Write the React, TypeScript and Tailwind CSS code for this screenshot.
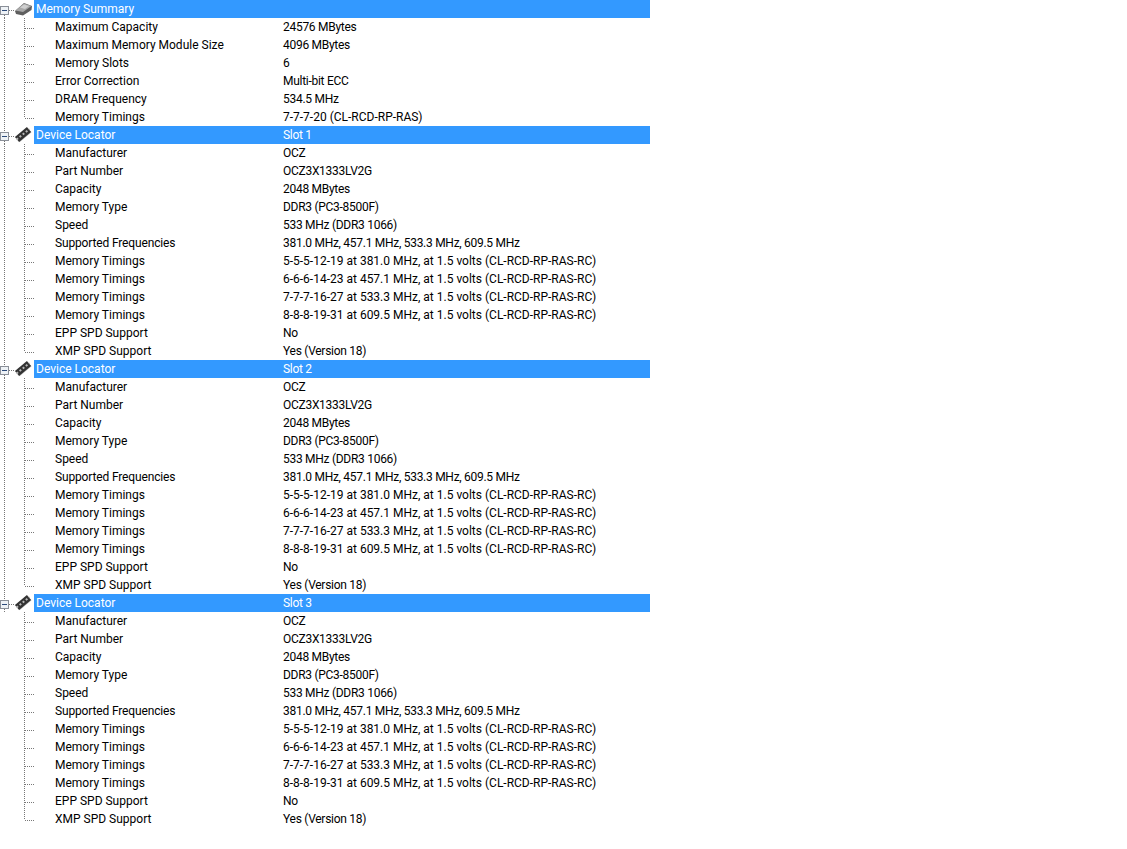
const FONT = "font-['Roboto',sans-serif]";

type Row = [string, string];

const slotRows: Row[] = [
  ["Manufacturer", "OCZ"],
  ["Part Number", "OCZ3X1333LV2G"],
  ["Capacity", "2048 MBytes"],
  ["Memory Type", "DDR3 (PC3-8500F)"],
  ["Speed", "533 MHz (DDR3 1066)"],
  ["Supported Frequencies", "381.0 MHz, 457.1 MHz, 533.3 MHz, 609.5 MHz"],
  ["Memory Timings", "5-5-5-12-19 at 381.0 MHz, at 1.5 volts (CL-RCD-RP-RAS-RC)"],
  ["Memory Timings", "6-6-6-14-23 at 457.1 MHz, at 1.5 volts (CL-RCD-RP-RAS-RC)"],
  ["Memory Timings", "7-7-7-16-27 at 533.3 MHz, at 1.5 volts (CL-RCD-RP-RAS-RC)"],
  ["Memory Timings", "8-8-8-19-31 at 609.5 MHz, at 1.5 volts (CL-RCD-RP-RAS-RC)"],
  ["EPP SPD Support", "No"],
  ["XMP SPD Support", "Yes (Version 18)"],
];

const summaryRows: Row[] = [
  ["Maximum Capacity", "24576 MBytes"],
  ["Maximum Memory Module Size", "4096 MBytes"],
  ["Memory Slots", "6"],
  ["Error Correction", "Multi-bit ECC"],
  ["DRAM Frequency", "534.5 MHz"],
  ["Memory Timings", "7-7-7-20 (CL-RCD-RP-RAS)"],
];

const DOT = "1 1";

function ChipIcon() {
  return (
    <g>
      <path d="M15 11 L24 3 L32 6 L31.500 10 L23 15.500 L16 14 Z" fill="#5f5f5f" />
      <path d="M15.500 10.500 L24 3.500 L31.500 6 L23 12 Z" fill="#a8a8a8" />
      <path d="M20 7.500 L24 4.500 L29 6 L25 9 Z" fill="#cfcfcf" />
    </g>
  );
}

function StickIcon() {
  return (
    <g>
      <path d="M19 15.500 L31 5.500" stroke="#c4c4c4" strokeWidth="2" />
      <path d="M17 13.500 L29 3.500" stroke="#333" strokeWidth="6.500" />
      <path d="M16.500 13.500 L29.500 3" stroke="#b8b8b8" strokeWidth="2" strokeDasharray="2 2" />
    </g>
  );
}

function HeaderGutter({ first, icon }: { first: boolean; icon: "chip" | "stick" }) {
  return (
    <svg width="34" height="18" className="shrink-0">
      {!first && <path d="M4.500 0 V6" stroke="#777" strokeDasharray={DOT} />}
      <path d="M4.500 15 V18" stroke="#777" strokeDasharray={DOT} />
      <rect x="0.500" y="6.500" width="8" height="8" fill="#eef2f6" stroke="#8a8f98" />
      <path d="M2 10.500 H7" stroke="#2b4a7a" />
      <path d="M9 10.500 H15" stroke="#777" strokeDasharray={DOT} />
      {icon === "chip" ? <ChipIcon /> : <StickIcon />}
    </svg>
  );
}

function RowGutter({ last, lastGroup }: { last: boolean; lastGroup: boolean }) {
  return (
    <svg width="55" height="18" className="shrink-0">
      {!lastGroup && <path d="M4.500 0 V18" stroke="#777" strokeDasharray={DOT} />}
      <path d={last ? "M24.500 0 V10" : "M24.500 0 V18"} stroke="#777" strokeDasharray={DOT} />
      <path d="M25 10.500 H35" stroke="#777" strokeDasharray={DOT} />
    </svg>
  );
}

function Group({ label, value, rows, icon, first, lastGroup }: {
  label: string; value: string; rows: Row[]; icon: "chip" | "stick"; first?: boolean; lastGroup?: boolean;
}) {
  return (
    <div>
      <div className="flex h-[18px] w-[650px]">
        <HeaderGutter first={!!first} icon={icon} />
        <div className="flex flex-1 items-center bg-[#3399ff] pl-[2px] text-white">
          <span className="w-[247px]">{label}</span>
          <span className="tracking-[-0.3px]">{value}</span>
        </div>
      </div>
      {rows.map((r, i) => (
        <div key={i} className="flex h-[18px] items-center text-black">
          <RowGutter last={i === rows.length - 1} lastGroup={!!lastGroup} />
          <span className={r[0] === "Supported Frequencies" ? "w-[228px] tracking-[-0.15px]" : "w-[228px]"}>{r[0]}</span>
          {/* timing strings already run the right width, the short values run wide in Roboto */}
          <span className={r[0] === "Memory Timings" ? "" : "tracking-[-0.28px]"}>{r[1]}</span>
        </div>
      ))}
    </div>
  );
}

export default function App() {
  return (
    <div className={`${FONT} h-[849px] w-[1127px] overflow-hidden bg-white text-[12px] leading-[18px]`}>
      <Group first label="Memory Summary" value="" rows={summaryRows} icon="chip" />
      <Group label="Device Locator" value="Slot 1" rows={slotRows} icon="stick" />
      <Group label="Device Locator" value="Slot 2" rows={slotRows} icon="stick" />
      <Group lastGroup label="Device Locator" value="Slot 3" rows={slotRows} icon="stick" />
    </div>
  );
}
